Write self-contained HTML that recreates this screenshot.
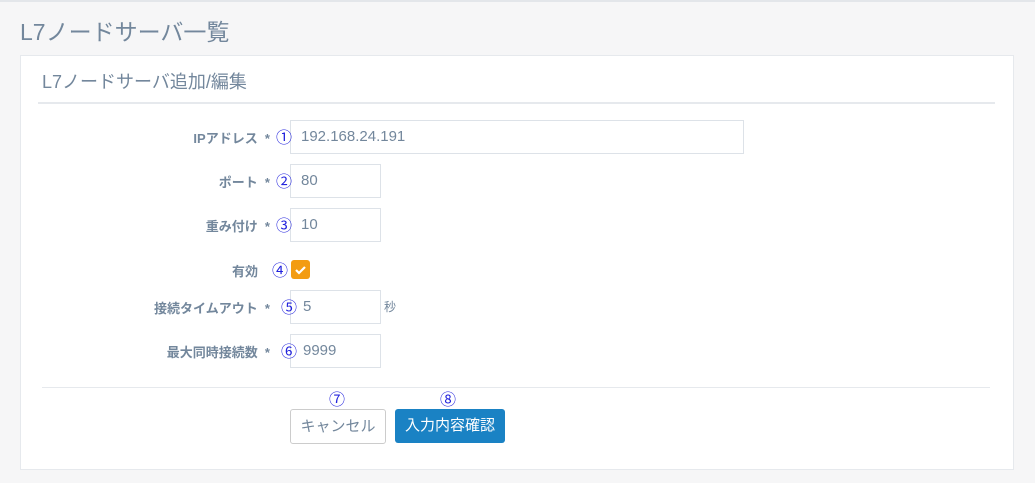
<!DOCTYPE html>
<html><head><meta charset="utf-8"><style>
body{margin:0;width:1035px;height:483px;background:#f6f6f7;font-family:"Liberation Sans","Noto Sans CJK JP",sans-serif;color:#73879C;position:relative;overflow:hidden}
.a{position:absolute}
.t{left:20px;top:13px;font-size:23px;color:#73879C}
.panel{left:20px;top:55px;width:992px;height:413px;background:#fff;border:1px solid #e6e9ed}
.pt{left:42px;top:68px;font-size:18px}
.hr{height:2px;background:#e6e9ed}
.lab{width:270px;left:0;text-align:right;font-size:13px;font-weight:bold;color:#73879C}
.n{font-family:"Noto Sans CJK JP",sans-serif;font-size:16px;line-height:18px;color:#2222dd;width:16px;text-align:center;z-index:2}
.in{border:1px solid #dde2e8;height:32px;box-sizing:content-box;font-size:15px;line-height:32px;padding-left:10px;color:#73879C;background:#fff}
.btn{height:33px;line-height:33px;font-size:15px;text-align:center;border-radius:3px}
</style></head><body>
<div class="a" style="left:0;top:0;width:1035px;height:2px;background:#e3e6ea"></div>
<div class="a t">L7ノードサーバ一覧</div>
<div class="a panel"></div>
<div class="a pt">L7ノードサーバ追加/編集</div>
<div class="a hr" style="left:38px;top:102px;width:957px"></div>

<div class="a lab" style="top:128px">IPアドレス&nbsp; *</div><div class="a n" style="left:276px;top:127px">①</div>
<div class="a in" style="left:290px;top:120px;width:442px">192.168.24.191</div>
<div class="a lab" style="top:172px">ポート&nbsp; *</div><div class="a n" style="left:276px;top:171px">②</div>
<div class="a in" style="left:290px;top:164px;width:79px">80</div>
<div class="a lab" style="top:216px">重み付け&nbsp; *</div><div class="a n" style="left:276px;top:215px">③</div>
<div class="a in" style="left:290px;top:208px;width:79px">10</div>
<div class="a lab" style="top:261px;width:258px">有効</div><div class="a n" style="left:272px;top:260px">④</div>
<div class="a" style="left:291px;top:260px;width:19px;height:19px;background:#f39c12;border-radius:3px"><svg width="19" height="19"><path d="M5 10l3 3 6-6" stroke="#fff" stroke-width="2.2" fill="none"/></svg></div>
<div class="a lab" style="top:298px">接続タイムアウト&nbsp; *</div><div class="a n" style="left:281px;top:297px">⑤</div>
<div class="a in" style="left:290px;top:290px;width:77px;padding-left:12px">5</div>
<div class="a" style="left:384px;top:298px;font-size:12px">秒</div>
<div class="a lab" style="top:342px">最大同時接続数&nbsp; *</div><div class="a n" style="left:281px;top:341px">⑥</div>
<div class="a in" style="left:290px;top:334px;width:77px;padding-left:12px">9999</div>

<div class="a hr" style="left:42px;top:387px;width:948px;height:1px"></div>
<div class="a n" style="left:329px;top:389px">⑦</div>
<div class="a n" style="left:440px;top:389px">⑧</div>
<div class="a btn" style="left:290px;top:409px;width:94px;border:1px solid #ccc;background:#fff;color:#73879C">キャンセル</div>
<div class="a btn" style="left:395px;top:409px;width:110px;height:34px;line-height:34px;background:#1a82c4;color:#fff">入力内容確認</div>
</body></html>
